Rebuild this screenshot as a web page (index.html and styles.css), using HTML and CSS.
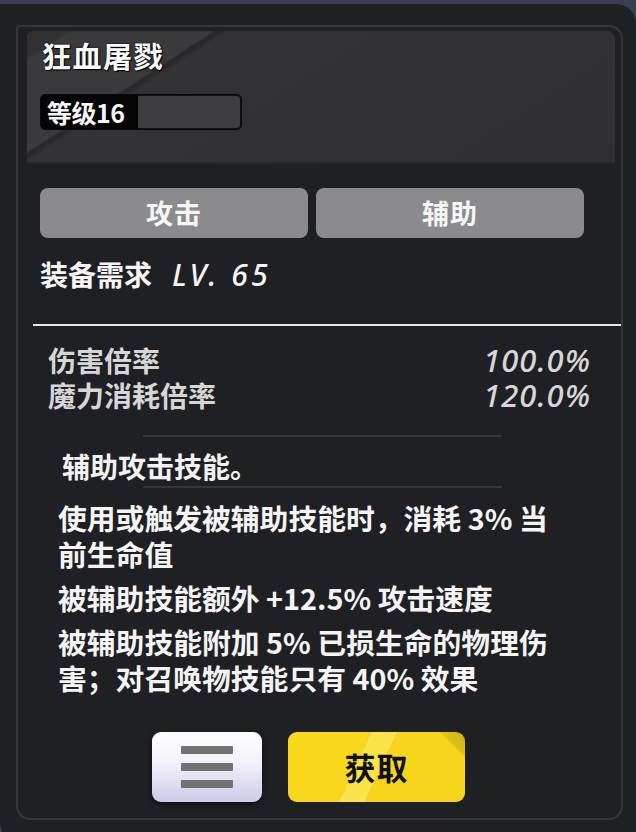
FILE: index.html
```html
<!DOCTYPE html>
<html lang="zh-CN">
<head>
<meta charset="utf-8">
<link rel="stylesheet" href="styles.css">
</head>
<body>
<div class="panel">
  <div class="frame">
    <div class="header">
      <div class="title">狂血屠戮</div>
      <div class="level">
        <span class="level-text">等级16</span>
        <span class="level-fill"></span>
      </div>
    </div>
    <div class="tags">
      <div class="tag">攻击</div>
      <div class="tag">辅助</div>
    </div>
    <div class="req">装备需求<span class="lv">LV. 65</span></div>
    <div class="rule"></div>
    <div class="stats">
      <div class="stat"><span>伤害倍率</span><span class="val">100.0%</span></div>
      <div class="stat"><span>魔力消耗倍率</span><span class="val">120.0%</span></div>
    </div>
    <div class="divider"></div>
    <div class="kind">辅助攻击技能。</div>
    <div class="divider"></div>
    <div class="desc">
      <p>使用或触发被辅助技能时，消耗 3% 当前生命值</p>
      <p>被辅助技能额外 +12.5% 攻击速度</p>
      <p>被辅助技能附加 5% 已损生命的物理伤害；对召唤物技能只有 40% 效果</p>
    </div>
    <div class="actions">
      <div class="menu-btn">
        <svg width="52" height="42" viewBox="0 0 52 42"><rect x="0" y="0" width="52" height="8" rx="1" fill="#727272"/><rect x="0" y="17" width="52" height="8" rx="1" fill="#727272"/><rect x="0" y="34" width="52" height="8" rx="1" fill="#727272"/></svg>
      </div>
      <div class="get-btn">获取</div>
    </div>
  </div>
</div>
</body>
</html>
```
FILE: styles.css
```css
* { box-sizing: border-box; }
html, body { margin: 0; padding: 0; }
body {
  background: #3b3e50;
  width: 636px;
  height: 832px;
  overflow: hidden;
  font-family: "Noto Sans CJK SC", "Noto Sans", sans-serif;
  color: #f2f2f2;
}
.panel {
  margin-top: 4px;
  height: 840px;
  background: #1f2024;
  border-radius: 0 20px 0 22px;
  padding-top: 21px;
}
.frame {
  margin-left: 16px;
  width: 607px;
  height: 795px;
  border: 2px solid #35363a;
  border-radius: 4px 14px 14px 14px;
  padding: 4px 6px 0 9px;
}
.header {
  height: 133px;
  border-radius: 6px 8px 0 0;
  background:
    linear-gradient(147deg, #313133 0, #313133 5%, #3a3a3c 6%, #3a3a3c 23.5%, #29292b 24%, #29292b 24.6%, #333335 25.5%, #303032 100%);
  padding: 4px 0 0 15px;
  border-bottom: 2px solid #262628;
}
.title {
  font-size: 29px;
  font-weight: 700;
  line-height: 40px;
  letter-spacing: 1.5px;
  color: #fafafa;
  text-shadow: 0 0 2px #000, 1px 1px 1px #000;
}
.level {
  margin-top: 19px;
  margin-left: -2px;
  width: 202px;
  height: 36px;
  display: flex;
  background: #111;
  border: 1px solid #0a0a0a;
  border-radius: 5px;
  overflow: hidden;
}
.level-text {
  width: 97px;
  background: #050505;
  font-size: 25px;
  font-weight: 700;
  line-height: 34px;
  padding-left: 6px;
  color: #f5f5f5;
  letter-spacing: -0.5px;
}
.level-fill {
  flex: 1;
  background: #3e3e40;
  border-radius: 0 4px 4px 0;
  margin: 1px 1px 1px 0;
}
.tags {
  display: flex;
  gap: 8px;
  margin-top: 24px;
  margin-left: 13px;
}
.tag {
  width: 268px;
  height: 50px;
  background: #8b8b8d;
  border-radius: 8px;
  text-align: center;
  font-size: 27px;
  font-weight: 700;
  line-height: 50px;
  color: #f6f6f6;
  letter-spacing: 1px;
}
.req {
  margin-top: 18px;
  margin-left: 13px;
  font-size: 28px;
  font-weight: 700;
  line-height: 36px;
  color: #f5f5f5;
}
.lv {
  font-style: italic;
  font-weight: 500;
  font-size: 30px;
  margin-left: 20px;
  letter-spacing: 3.5px;
  font-family: "Noto Sans", sans-serif;
}
.rule {
  margin-top: 31px;
  margin-left: 6px;
  height: 2px;
  background: #e6e6e6;
  margin-right: -6px;
}
.stats {
  margin-top: 17px;
  margin-left: 21px;
  margin-right: 24px;
}
.stat {
  display: flex;
  justify-content: space-between;
  align-items: center;
  font-size: 28px;
  line-height: 35px;
  height: 35px;
  color: #d6d6d6;
  font-weight: 600;
}
.val {
  font-family: "Noto Sans", sans-serif;
  font-style: italic;
  font-weight: 500;
  font-size: 31px;
  letter-spacing: 1px;
}
.divider {
  margin-left: 116px;
  width: 359px;
  height: 2px;
  background: #36373b;
}
.stats + .divider { margin-top: 22px; }
.kind {
  margin-left: 35px;
  font-size: 28px;
  font-weight: 600;
  line-height: 36px;
  margin-top: 11px;
  margin-bottom: 2px;
}
.desc {
  margin: 12px 0 0 31px;
  width: 505px;
  font-size: 28.8px;
  font-weight: 600;
  line-height: 36px;
  color: #f4f4f4;
}
.desc p { margin: 0 0 8px 0; }
.actions {
  display: flex;
  gap: 26px;
  margin-top: 36px;
  margin-left: 125px;
}
.menu-btn {
  width: 110px;
  height: 70px;
  border-radius: 9px;
  background: linear-gradient(180deg, #ffffff 0%, #f4f3fb 40%, #cdcbe8 100%);
  box-shadow: 0 2px 6px rgba(0,0,0,0.6);
  display: flex;
  align-items: center;
  justify-content: center;
}
.get-btn {
  width: 177px;
  height: 70px;
  border-radius: 9px;
  background:
    linear-gradient(225deg, #cfae10 0, #e0c418 10%, rgba(0,0,0,0) 10.5%),
    linear-gradient(115deg, #f8d81a 0, #f8d81a 40%, #fae34a 40%, #fae34a 52%, #f6d51c 52%, #f6d51c 100%);
  color: #111;
  font-size: 31px;
  font-weight: 700;
  line-height: 70px;
  text-align: center;
  letter-spacing: 1px;
}
```
